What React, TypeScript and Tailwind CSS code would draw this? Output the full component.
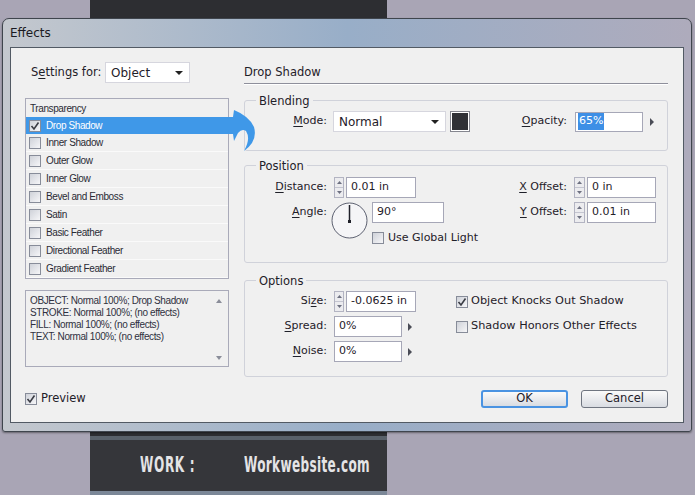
import React from 'react';

const UI = "font-['DejaVu_Sans',Tahoma,sans-serif] text-[11px] text-[#1f2029]";
const SMALL = "font-['Liberation_Sans',Arial,sans-serif] text-[10px] tracking-[-0.4px]";

const effects = [
  'Inner Shadow',
  'Outer Glow',
  'Inner Glow',
  'Bevel and Emboss',
  'Satin',
  'Basic Feather',
  'Directional Feather',
  'Gradient Feather',
];

const summary = [
  'OBJECT: Normal 100%; Drop Shadow',
  'STROKE: Normal 100%; (no effects)',
  'FILL: Normal 100%; (no effects)',
  'TEXT: Normal 100%; (no effects)',
];

function Label({ text, u, w = 'w-[82px]' }: { text: string; u: number; w?: string }) {
  return (
    <span className={`${w} shrink-0 text-right`}>
      {text.slice(0, u)}
      <span className="underline underline-offset-2">{text[u]}</span>
      {text.slice(u + 1)}
    </span>
  );
}

function Check({ on = false }: { on?: boolean }) {
  return (
    <span className="flex h-[12px] w-[12px] shrink-0 items-center justify-center border border-[#878c99] bg-gradient-to-br from-[#cfd2d9] to-[#f6f6f8]">
      {on && (
        <svg width="10" height="10" viewBox="0 0 10 10">
          <path d="M1.5 5 L4 8 L8.5 1.5" fill="none" stroke="#3a3c44" strokeWidth="1.6" />
        </svg>
      )}
    </span>
  );
}

function Spinner({ w = 'w-[10px]' }: { w?: string }) {
  return (
    <span className={`${w} flex h-[21px] shrink-0 flex-col border border-[#b3b4c2] bg-[#ececef]`}>
      <span className="flex flex-1 items-center justify-center border-b border-[#c4c5d0]">
        <svg width="5" height="3" viewBox="0 0 5 3">
          <path d="M0 3 L2.5 0 L5 3Z" fill="#6d7080" />
        </svg>
      </span>
      <span className="flex flex-1 items-center justify-center">
        <svg width="5" height="3" viewBox="0 0 5 3">
          <path d="M0 0 L2.5 3 L5 0Z" fill="#6d7080" />
        </svg>
      </span>
    </span>
  );
}

function Field({ value, w }: { value: string; w: string }) {
  return (
    <span className={`${w} flex h-[21px] shrink-0 items-center border border-[#a6a7b7] bg-white pl-[4px]`}>
      {value}
    </span>
  );
}

function Arrow() {
  return (
    <svg width="4" height="8" viewBox="0 0 4 8" className="shrink-0">
      <path d="M0 0 L4 4 L0 8Z" fill="#4a4c56" />
    </svg>
  );
}

function Select({ value, w }: { value: string; w: string }) {
  return (
    <span className={`${w} flex h-[21px] shrink-0 items-center justify-between border border-[#d6d6de] bg-white pl-[5px] pr-[6px] text-[12px]`}>
      {value}
      <svg width="8" height="4" viewBox="0 0 8 4">
        <path d="M0 0 L8 0 L4 4Z" fill="#222" />
      </svg>
    </span>
  );
}

function Group({ title, h, mt, pt, children }: { title: string; h: string; mt: string; pt: string; children: React.ReactNode }) {
  return (
    <div className={`relative ${h} ${mt} ${pt} rounded-[3px] border border-[#d0d2da]`}>
      <span className="absolute -top-[8px] left-[11px] bg-[#f0f0f0] px-[3px] text-[11.5px]">{title}</span>
      {children}
    </div>
  );
}

export default function App() {
  return (
    <div className={`relative h-[495px] w-[695px] overflow-hidden bg-[#a9a5b5] ${UI}`}>
      {/* dark band behind the dialog */}
      <div className="absolute left-[90px] top-0 flex h-[495px] w-[297px] flex-col bg-[#2d2e32]">
        <div className="flex-1" />
        <div className="h-[4px] bg-[#2d2e32]" />
        <div className="h-[4px] bg-[#59616a]" />
        <div className="flex h-[51px] items-center whitespace-nowrap bg-[#35363a] font-['DejaVu_Sans_Condensed','DejaVu_Sans',sans-serif] text-[21px] font-bold text-[#e4e4e6]">
          <span className="ml-[50px] inline-block w-[70px] origin-left scale-x-[0.64] tracking-[1px]">WORK :</span>
          <span className="ml-[34px] inline-block origin-left scale-x-[0.64] tracking-[0.5px]">Workwebsite.com</span>
        </div>
        <div className="h-[4px] bg-[#7b8797]" />
      </div>

      {/* dialog window */}
      <div className="absolute left-[2px] top-[18px] flex h-[414px] w-[690px] flex-col rounded-t-[7px] rounded-b-[3px] border border-[#3f454d] bg-gradient-to-r from-[#c4c8ce] via-[#98aec8] to-[#aeabbc] shadow-[0_1px_2px_rgba(0,0,0,0.4)]">
        <div className="flex h-[28px] items-center pl-[7px] text-[12px] text-[#1a1a22]">Effects</div>
        <div className="relative ml-[7px] flex h-[376px] w-[674px] flex-col border border-[#525a64] bg-[#f0f0f0] pl-[14px] pt-[14px]">
          <div className="flex gap-[15px]">
            {/* left column */}
            <div className="flex w-[204px] flex-col">
              <div className="flex h-[21px] items-center">
                <span className="w-[80px] pl-[6px] text-[11.5px]">
                  S<span className="underline underline-offset-2">e</span>ttings for:
                </span>
                <Select value="Object" w="w-[85px]" />
              </div>
              <div className={`mt-[15px] flex h-[181px] flex-col border border-[#a9aab9] ${SMALL} text-[#2a2b35]`}>
                <div className="flex h-[18px] items-center pl-[4px]">Transparency</div>
                <div className="flex h-[17px] items-center bg-[#3f98e8] pl-[3px] text-white">
                  <Check on />
                  <span className="ml-[5px]">Drop Shadow</span>
                </div>
                {effects.map((e) => (
                  <div key={e} className="flex h-[18px] items-center border-b border-[#fafafa] pl-[3px]">
                    <Check />
                    <span className="ml-[5px]">{e}</span>
                  </div>
                ))}
              </div>
              <div className={`relative mt-[11px] h-[77px] border border-[#a9aab9] pl-[4px] pt-[4px] leading-[12px] ${SMALL} text-[#2f3140]`}>
                {summary.map((s) => (
                  <div key={s}>{s}</div>
                ))}
                <svg width="6" height="4" viewBox="0 0 6 4" className="absolute right-[6px] top-[8px]">
                  <path d="M0 4 L3 0 L6 4Z" fill="#8a8d99" />
                </svg>
                <svg width="6" height="4" viewBox="0 0 6 4" className="absolute bottom-[6px] right-[6px]">
                  <path d="M0 0 L3 4 L6 0Z" fill="#8a8d99" />
                </svg>
              </div>
            </div>

            {/* right column */}
            <div className="flex w-[424px] flex-col">
              <div className="flex h-[22px] items-center border-b border-[#8e8f9b] text-[11.5px] shadow-[0_1px_0_#ffffff]">Drop Shadow</div>

              <Group title="Blending" h="h-[51px]" mt="mt-[16px]" pt="pt-[10px]">
                <div className="flex h-[21px] items-center">
                  <div className="flex w-[244px] items-center">
                    <Label text="Mode:" u={0} />
                    <span className="ml-[6px]">
                      <Select value="Normal" w="w-[113px]" />
                    </span>
                    <span className="ml-[4px] h-[21px] w-[20px] border border-[#85868f] bg-white p-[1px]">
                      <span className="block h-full w-full bg-[#303136]" />
                    </span>
                  </div>
                  <Label text="Opacity:" u={0} w="w-[78px]" />
                  <span className="ml-[8px] flex h-[20px] w-[68px] items-center border border-[#a6a7b7] bg-white pl-[2px]">
                    <span className="bg-[#3d8fe6] px-[1px] text-white">65%</span>
                  </span>
                  <span className="ml-[7px]">
                    <Arrow />
                  </span>
                </div>
              </Group>

              <Group title="Position" h="h-[98px]" mt="mt-[14px]" pt="pt-[11px]">
                <div className="flex">
                  <div className="flex w-[244px] flex-col">
                    <div className="flex h-[21px] items-center">
                      <Label text="Distance:" u={0} />
                      <span className="ml-[7px] flex">
                        <Spinner />
                        <span className="ml-[2px]">
                          <Field value="0.01 in" w="w-[70px]" />
                        </span>
                      </span>
                    </div>
                    <div className="mt-[4px] flex items-start">
                      <span className="flex h-[21px] items-center">
                        <Label text="Angle:" u={0} />
                      </span>
                      <svg width="37" height="37" viewBox="0 0 37 37" className="ml-[4px] shrink-0">
                        <circle cx="18.5" cy="18.5" r="17.5" fill="#f5f5f7" stroke="#5c6070" strokeWidth="1" />
                        <path d="M18.5 3 L18.5 19" stroke="#1f2029" strokeWidth="1.5" />
                        <rect x="17" y="18" width="3" height="3" fill="#1f2029" />
                      </svg>
                      <div className="ml-[4px] flex flex-col">
                        <Field value="90°" w="w-[72px]" />
                        <div className="mt-[9px] flex h-[12px] items-center">
                          <Check />
                          <span className="ml-[4px]">Use Global Light</span>
                        </div>
                      </div>
                    </div>
                  </div>
                  <div className="flex flex-col">
                    <div className="flex h-[21px] items-center">
                      <Label text="X Offset:" u={0} w="w-[78px]" />
                      <span className="ml-[7px] flex">
                        <Spinner w="w-[11px]" />
                        <span className="ml-[2px]">
                          <Field value="0 in" w="w-[69px]" />
                        </span>
                      </span>
                    </div>
                    <div className="mt-[4px] flex h-[21px] items-center">
                      <Label text="Y Offset:" u={0} w="w-[78px]" />
                      <span className="ml-[7px] flex">
                        <Spinner w="w-[11px]" />
                        <span className="ml-[2px]">
                          <Field value="0.01 in" w="w-[69px]" />
                        </span>
                      </span>
                    </div>
                  </div>
                </div>
              </Group>

              <Group title="Options" h="h-[97px]" mt="mt-[17px]" pt="pt-[10px]">
                <div className="flex">
                  <div className="flex w-[211px] flex-col">
                    <div className="flex h-[21px] items-center">
                      <Label text="Size:" u={2} />
                      <span className="ml-[7px] flex">
                        <Spinner />
                        <span className="ml-[2px]">
                          <Field value="-0.0625 in" w="w-[70px]" />
                        </span>
                      </span>
                    </div>
                    <div className="mt-[4px] flex h-[21px] items-center">
                      <Label text="Spread:" u={0} />
                      <span className="ml-[7px]">
                        <Field value="0%" w="w-[68px]" />
                      </span>
                      <span className="ml-[6px]">
                        <Arrow />
                      </span>
                    </div>
                    <div className="mt-[4px] flex h-[21px] items-center">
                      <Label text="Noise:" u={0} />
                      <span className="ml-[7px]">
                        <Field value="0%" w="w-[68px]" />
                      </span>
                      <span className="ml-[6px]">
                        <Arrow />
                      </span>
                    </div>
                  </div>
                  <div className="flex flex-col text-[11.3px]">
                    <div className="flex h-[21px] items-center">
                      <Check on />
                      <span className="ml-[3px]">Object Knocks Out Shadow</span>
                    </div>
                    <div className="mt-[4px] flex h-[21px] items-center">
                      <Check />
                      <span className="ml-[3px]">Shadow Honors Other Effects</span>
                    </div>
                  </div>
                </div>
              </Group>
            </div>
          </div>

          {/* bottom row */}
          <div className="mt-[13px] flex h-[18px] w-[643px] items-center">
            <Check on />
            <span className="ml-[4px] text-[11.5px]">Preview</span>
            <div className="ml-auto flex gap-[13px]">
              <button className="h-[18px] w-[87px] rounded-[3px] border-2 border-[#4a93e2] bg-gradient-to-b from-[#fafafa] to-[#d9dce2] text-[11.5px] leading-none">
                OK
              </button>
              <button className="h-[18px] w-[87px] rounded-[3px] border border-[#6f7580] bg-gradient-to-b from-[#fafafa] to-[#d9dce2] text-[11.5px] leading-none">
                Cancel
              </button>
            </div>
          </div>

          {/* pointer arrow from the selected effect */}
          <svg width="36" height="50" viewBox="225 105 36 50" className="absolute left-[214px] top-[57px]">
            <path
              d="M225 117 H233 L234 110 Q249 116 254 127 Q258 141 244 151 Q251 139 246 131 Q242 128 238 133 L234 141 L233 134 H225 Z"
              fill="#3f98e8"
            />
          </svg>
        </div>
      </div>
    </div>
  );
}
